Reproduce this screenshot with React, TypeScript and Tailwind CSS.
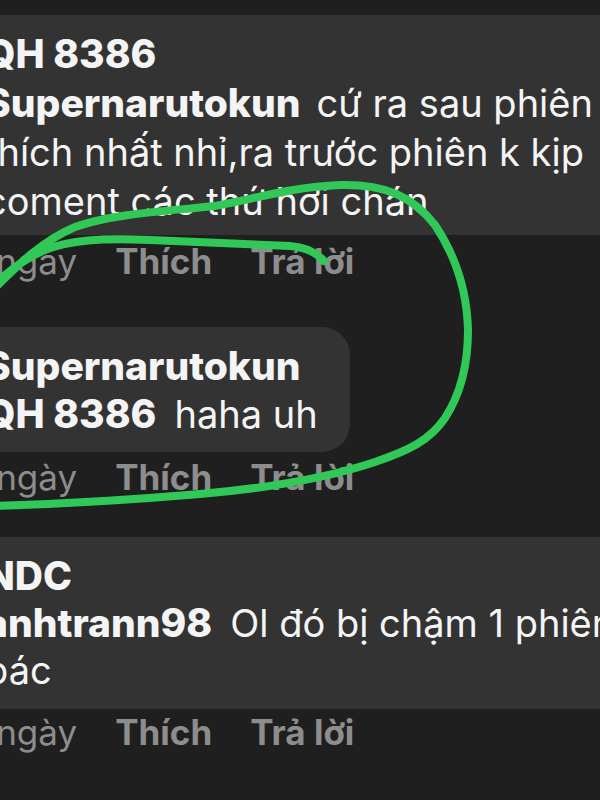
const Actions = ({ className = "" }: { className?: string }) => (
  <div className={"flex items-center gap-[38px] text-[35px] leading-[40px] text-[#8d8d8d] whitespace-nowrap " + className}>
    <span className="font-normal">2 ngày</span>
    <span className="font-bold">Thích</span>
    <span className="font-bold">Trả lời</span>
  </div>
)

const Circle = () => (
  <svg
    className="absolute inset-0 pointer-events-none"
    width="600"
    height="800"
    viewBox="0 0 600 800"
    fill="none"
    stroke="#30c958"
    strokeWidth="8"
    strokeLinecap="round"
    strokeLinejoin="round"
  >
    <path d="M 324 261 C 316 252, 306 247, 290 246 L 150 240 C 100 238, 70 240, 45 250 C 25 258, 10 270, -5 284" />
    <path d="M -5 288 C 15 268, 40 242, 75 227 C 115 213, 170 211, 215 206 C 255 199, 290 187, 340 185 C 385 184, 412 196, 435 225 C 455 255, 467 290, 468 330 C 468 365, 460 395, 445 418 C 430 440, 410 450, 375 462 C 330 477, 270 488, 200 494 C 130 500, 60 504, -5 506" />
  </svg>
)

export default function App() {
  return (
    <div className="relative w-[600px] h-[800px] overflow-hidden bg-[#1f1f1f] text-[#f4f4f4] font-['Inter',sans-serif]">
      <div className="ml-[-44px] pt-[15px] flex flex-col items-start">
        {/* comment 1 */}
        <div className="rounded-[28px] bg-[#333333] pl-[29px] pr-[60px] pt-[14px] pb-[9px] text-[38px] leading-[49px] whitespace-nowrap">
          <div className="font-extrabold text-[39px]">QH 8386</div>
          <div>
            <span className="font-extrabold text-[39px]">Supernarutokun</span>
            <span className="ml-[16px]">cứ ra sau phiên</span>
          </div>
          <div>thích nhất nhỉ,ra trước phiên k kịp</div>
          <div>coment các thứ hơi chán</div>
        </div>
        <Actions className="mt-[6px] ml-[9px]" />

        {/* reply */}
        <div className="mt-[46px] rounded-[28px] bg-[#333333] pl-[29px] pr-[32px] pt-[15px] pb-[14px] text-[38px] leading-[48px] whitespace-nowrap">
          <div className="font-extrabold text-[39px]">Supernarutokun</div>
          <div>
            <span className="font-extrabold text-[39px]">QH 8386</span>
            <span className="ml-[18px]">haha uh</span>
          </div>
        </div>
        <Actions className="mt-[5px] ml-[9px]" />

        {/* comment 2 */}
        <div className="mt-[40px] rounded-[28px] bg-[#333333] pl-[29px] pr-[60px] pt-[15px] pb-[15px] text-[38px] leading-[47px] whitespace-nowrap">
          <div className="font-extrabold text-[39px]">NDC</div>
          <div>
            <span className="font-extrabold text-[39px]">anhtrann98</span>
            <span className="ml-[18px]">Ol đó bị chậm 1 phiên</span>
          </div>
          <div>bác</div>
        </div>
        <Actions className="mt-[3px] ml-[9px]" />
      </div>
      <Circle />
    </div>
  )
}
